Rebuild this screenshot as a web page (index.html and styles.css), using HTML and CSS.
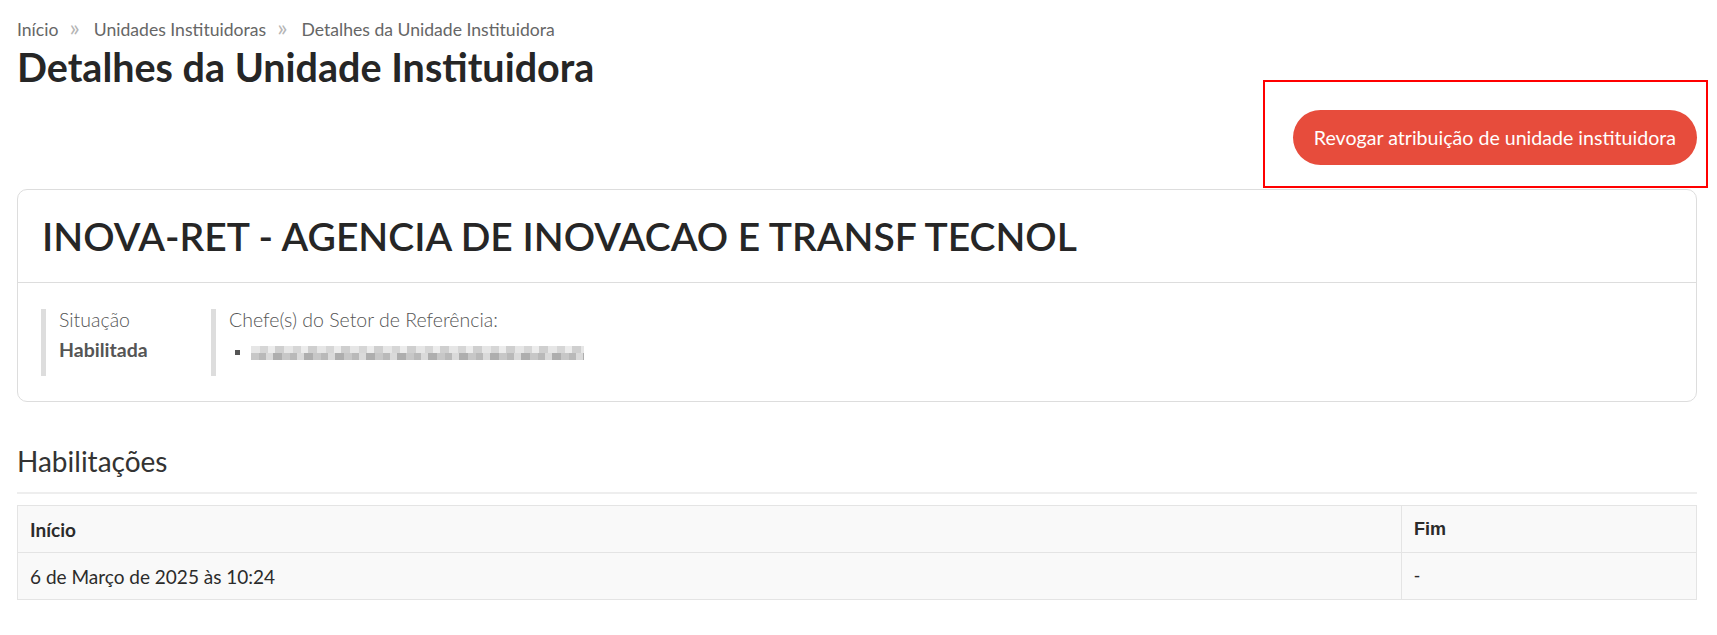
FILE: index.html
```html
<!DOCTYPE html>
<html lang="pt-BR">
<head>
<meta charset="utf-8">
<title>Detalhes da Unidade Instituidora</title>
<link rel="stylesheet" href="styles.css">
</head>
<body>
<div class="page">
  <nav class="breadcrumb">
    <a href="#">Início</a><span class="sep">»</span><a href="#">Unidades Instituidoras</a><span class="sep">»</span><span class="current">Detalhes da Unidade Instituidora</span>
  </nav>
  <h1 class="page-title">Detalhes da Unidade Instituidora</h1>

  <div class="actions">
    <div class="action-wrap">
      <button class="btn-danger">Revogar atribuição de unidade instituidora</button>
      <span class="highlight"></span>
    </div>
  </div>

  <section class="card">
    <header class="card-header">
      <h2 class="card-title">INOVA-RET - AGENCIA DE INOVACAO E TRANSF TECNOL</h2>
    </header>
    <div class="card-body">
      <div class="field field-status">
        <div class="field-label">Situação</div>
        <div class="field-value">Habilitada</div>
      </div>
      <div class="field">
        <div class="field-label">Chefe(s) do Setor de Referência:</div>
        <ul class="chiefs">
          <li><span class="redacted"></span></li>
        </ul>
      </div>
    </div>
  </section>

  <h2 class="section-title">Habilitações</h2>
  <table class="table">
    <thead>
      <tr><th>Início</th><th class="col-end">Fim</th></tr>
    </thead>
    <tbody>
      <tr><td>6 de Março de 2025 às 10:24</td><td class="col-end">-</td></tr>
    </tbody>
  </table>
</div>
</body>
</html>
```

FILE: styles.css
```css
* { box-sizing: border-box; }

body {
  margin: 0;
  font-family: Lato, "Open Sans", sans-serif;
  color: #2b2b2b;
  background: #fff;
}

.page {
  padding: 17px 20px 0 17px;
}

.breadcrumb {
  font-size: 17.6px;
  line-height: 26px;
  color: #666;
}
.breadcrumb a {
  color: #666;
  text-decoration: none;
}
.breadcrumb .sep {
  display: inline-block;
  color: #b5b5b5;
  font-size: 24px;
  line-height: 20px;
  margin: 0 14px 0 11px;
}
.breadcrumb .current {
  color: #666;
}

.page-title {
  margin: 1px 0 0;
  font-size: 39.5px;
  line-height: 46px;
  font-weight: 700;
  color: #262626;
}

.actions {
  display: flex;
  justify-content: flex-end;
  margin-top: 20px;
}
.action-wrap {
  position: relative;
}
.btn-danger {
  display: block;
  height: 55px;
  padding: 0 21px;
  border: none;
  border-radius: 28px;
  background: #e74c3c;
  color: #fff;
  font-family: Lato, sans-serif;
  font-size: 19.6px;
  cursor: pointer;
}
.highlight {
  position: absolute;
  top: -30px;
  left: -30px;
  right: -11px;
  bottom: -23px;
  border: 2px solid #f00;
  pointer-events: none;
}

.card {
  margin-top: 24px;
  border: 1px solid #ddd;
  border-radius: 10px;
}
.card-header {
  border-bottom: 1px solid #ddd;
  padding: 18px 24px 0;
  height: 93px;
}
.card-title {
  margin: 0;
  font-size: 39px;
  line-height: 56px;
  font-weight: 600;
  color: #262626;
}
.card-body {
  display: flex;
  padding: 26px 23px 25px;
}
.field {
  border-left: 5px solid #ddd;
  padding: 0 0 4px 13px;
  min-height: 67px;
}
.field-status {
  width: 170px;
}
.field-label {
  font-size: 19.5px;
  font-weight: 300;
  color: #555;
  line-height: 22px;
}
.field-value {
  margin-top: 6px;
  font-size: 19.5px;
  font-weight: 700;
  color: #555;
  line-height: 26px;
}
.chiefs {
  margin: 8px 0 0;
  padding: 0 0 0 22px;
  list-style: square;
  color: #555;
  font-size: 14px;
  line-height: 26px;
}
.redacted {
  display: inline-block;
  vertical-align: middle;
  width: 333px;
  height: 14px;
  background:
    repeating-linear-gradient(90deg, #e6e6e6 0 9px, #d6d6d6 9px 17px, #ececec 17px 24px, #cfcfcf 24px 33px) top / 100% 7px no-repeat,
    repeating-linear-gradient(90deg, #c7c7c7 0 8px, #b9b9b9 8px 15px, #dadada 15px 22px, #aeaeae 22px 31px) bottom / 100% 7px no-repeat;
}

.section-title {
  margin: 41px 0 0;
  padding-bottom: 13px;
  border-bottom: 2px solid #eee;
  font-size: 28px;
  line-height: 36px;
  font-weight: 400;
  color: #333;
}

.table {
  width: 100%;
  margin-top: 11px;
  border-collapse: collapse;
  border: 1px solid #ddd;
  font-size: 19px;
}
.table th, .table td {
  background: #f9f9f9;
  border: 1px solid #e4e4e4;
  padding: 0 12px;
  height: 47px;
  text-align: left;
  color: #2b2b2b;
}
.table th {
  font-weight: 700;
}
.table .col-end {
  width: 295px;
  font-family: "Liberation Sans", Arial, sans-serif;
  font-size: 18px;
}
```
